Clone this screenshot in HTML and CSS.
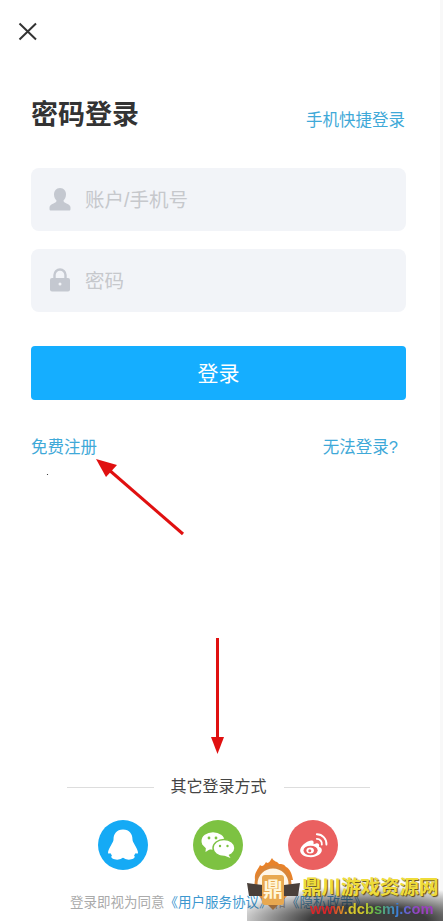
FILE: index.html
```html
<!DOCTYPE html>
<html lang="zh-CN">
<head>
  <meta charset="UTF-8" />
  <meta name="viewport" content="width=device-width, initial-scale=1.0" />
  <title>密码登录</title>
  <link rel="stylesheet" href="styles.css">
</head>
<body>
  <div class="app-container">
    <button class="close-btn" aria-label="关闭">
      <svg width="20" height="20" viewBox="0 0 20 20"><path d="M1.500 2.500 L18 18.500 M18 2.500 L1.500 18.500" stroke="#333" stroke-width="2" fill="none"/></svg>
    </button>

    <div class="form-area">
      <div class="title-row">
        <h1>密码登录</h1>
        <a class="link">手机快捷登录</a>
      </div>

      <div class="field">
        <svg width="22" height="24" viewBox="0 0 22 24"><path d="M11 1 C15 1 17 4 17 7.500 C17 10.500 15.600 12.500 14.500 13.500 C14.500 15 15.500 15.600 17.500 16.400 C20 17.400 21.500 18.500 21.500 20.500 L21.500 22 C21.500 23 21 23.500 20 23.500 L2 23.500 C1 23.500 .5 23 .5 22 L.5 20.500 C.5 18.500 2 17.400 4.500 16.400 C6.500 15.600 7.500 15 7.500 13.500 C6.400 12.500 5 10.500 5 7.500 C5 4 7 1 11 1 Z" fill="#c4c8d0"/></svg>
        <span>账户/手机号</span>
      </div>
      <div class="field">
        <svg width="22" height="24" viewBox="0 0 22 24"><path d="M5.500 10 V7 A5.500 5.500 0 0 1 16.500 7 V10" fill="none" stroke="#c4c8d0" stroke-width="2.400"/><rect x="1" y="10" width="20" height="13.500" rx="2" fill="#c4c8d0"/><circle cx="11" cy="16" r="1.500" fill="#f2f4f8"/></svg>
        <span>密码</span>
      </div>

      <button class="login-btn">登录</button>

      <div class="links-row">
        <a class="link">免费注册</a>
        <a class="link">无法登录?</a>
      </div>
    </div>

    <div class="other-login">
      <div class="divider"><span>其它登录方式</span></div>
      <div class="socials">
        <div class="social qq">
          <svg width="32" height="32" viewBox="0 0 32 32"><path d="M16 .5 C22.500 .5 25.500 5 25.500 10.500 C25.500 12.500 26.500 13.500 27.800 16 C29.300 18.800 31 21.500 31 23.500 C31 24.800 30 25 28.800 24 C28.300 24.800 27.800 25.600 27 26.200 C28 27.300 28 28.500 26.500 29.500 C24 31 19.500 31 17.500 29.500 C16.800 29 16.400 28.800 16 28.800 C15.600 28.800 15.200 29 14.500 29.500 C12.500 31 8 31 5.500 29.500 C4 28.500 4 27.300 5 26.200 C4.200 25.600 3.700 24.800 3.200 24 C2 25 1 24.800 1 23.500 C1 21.500 2.700 18.800 4.200 16 C5.500 13.500 6.500 12.500 6.500 10.500 C6.500 5 9.500 .5 16 .5 Z" fill="#fff"/></svg>
        </div>
        <div class="social wechat">
          <svg width="34" height="26" viewBox="0 0 34 26">
            <ellipse cx="12" cy="9" rx="11.500" ry="8.800" fill="#fff"/>
            <path d="M5 14 L4.500 20 L10 16.500 Z" fill="#fff"/>
            <ellipse cx="23" cy="16" rx="11" ry="8.500" fill="#fff" stroke="#7dc242" stroke-width="1.500"/>
            <path d="M27 22 L29.500 26 L23 23.500 Z" fill="#fff"/>
            <circle cx="8" cy="6" r="1.400" fill="#7dc242"/><circle cx="15" cy="6" r="1.400" fill="#7dc242"/>
            <circle cx="19" cy="14" r="1.200" fill="#7dc242"/><circle cx="26.500" cy="14" r="1.200" fill="#7dc242"/>
          </svg>
        </div>
        <div class="social weibo">
          <svg width="29" height="25" viewBox="0 0 34 30">
            <path d="M14 9 C8 10 1 16 1 21 C1 26 7 29 14 29 C21 29 27 25 27 20.500 C27 18 25 17 23.500 16.500 C24.500 13.500 23 12 20 12.500 L17 13.500 C17.500 10 17 8.500 14 9 Z" fill="#fff"/>
            <ellipse cx="13.500" cy="21" rx="8.500" ry="5.800" fill="#ea6060"/>
            <ellipse cx="13" cy="21" rx="4.500" ry="3.500" fill="#fff"/>
            <circle cx="12.500" cy="21.300" r="1.800" fill="#ea6060"/>
            <path d="M21 7 A6 6 0 0 1 27 14 M21 1.500 A11.500 11.500 0 0 1 32.500 14" fill="none" stroke="#fff" stroke-width="2.200" stroke-linecap="round"/>
          </svg>
        </div>
      </div>
      <p class="agreement">登录即视为同意<a>《用户服务协议》</a>和<a>《隐私政策》</a></p>
    </div>

    <!-- annotations drawn on top of the screenshot -->
    <svg class="arrows" width="443" height="921" viewBox="0 0 443 921">
      <path d="M183 534 L108 469" stroke="#e01010" stroke-width="3" fill="none"/>
      <path d="M96 459 L117 465 L106 477 Z" fill="#e01010"/>
      <path d="M217.500 638 V742" stroke="#e01010" stroke-width="3" fill="none"/>
      <path d="M211 737 H224 L217.500 754 Z" fill="#e01010"/>
      <circle cx="47.500" cy="474.500" r=".6" fill="#222"/>
    </svg>

    <div class="watermark">
      <svg class="wm-logo" width="54" height="58" viewBox="0 0 54 58">
        <path d="M8 24 C7 16 11 14 13 9 C15 11 17 10 19 6 C21 9 23 5 25 2 C27 6 30 5 32 8 C35 8 37 8 39 11 C42 12 45 17 46 24 Z" fill="#e8822a"/>
        <circle cx="26" cy="28" r="17" fill="#fff6e6" stroke="#d8863a" stroke-width="3"/>
        <path d="M0 27 L16 29 L16 40 L2 40 Z M53 27 L37 29 L37 40 L51 40 Z" fill="#4a403a"/>
        <path d="M14 42 L38 42 L26 54 Z" fill="#9a6a3c"/>
        <rect x="15" y="19" width="22" height="30" rx="3" fill="#e8a850"/>
        <text class="wm-glyph" x="26" y="41">鼎</text>
      </svg>
      <div class="wm-text">
        <div class="wm-name">鼎川游戏资源网</div>
        <div class="wm-url">www.dcbsmj.com</div>
      </div>
    </div>
  </div>
</body>
</html>
```

FILE: styles.css
```css
/* Base */
* { margin: 0; padding: 0; box-sizing: border-box; }
html, body { height: 100%; }
body {
  font-family: "Liberation Sans", "Noto Sans CJK SC", sans-serif;
  background: #f8f8f8;
  color: #333;
  overflow: hidden;
}
.app-container {
  position: relative;
  width: 440px;
  height: 921px;
  background: #fff;
  display: flex;
  flex-direction: column;
}

/* Close button */
.close-btn {
  align-self: flex-start;
  margin: 21px 0 0 18px;
  width: 20px;
  height: 20px;
  border: none;
  background: none;
}

/* Form */
.form-area {
  padding: 0 34px 0 31px;
}
.title-row {
  display: flex;
  justify-content: space-between;
  align-items: flex-start;
  margin-top: 54px;
  height: 73px;
  padding-right: 1px;
}
.title-row h1 {
  font-size: 27px;
  line-height: 40px;
  font-weight: 700;
  color: #333;
}
.title-row .link { line-height: 30px; margin-top: 10px; }
.link {
  color: #3fa9d8;
  font-size: 16.500px;
}
.field {
  display: flex;
  align-items: center;
  gap: 14px;
  height: 63px;
  padding: 0 0 2px 18px;
  margin-bottom: 18px;
  background: #f2f4f8;
  border-radius: 8px;
  color: #c6c8cc;
  font-size: 19.500px;
}
.login-btn {
  display: block;
  width: 100%;
  height: 54px;
  margin-top: 34px;
  padding-bottom: 2px;
  border: none;
  border-radius: 4px;
  background: #15aeff;
  color: #fff;
  font-family: inherit;
  font-size: 21px;
}
.links-row {
  display: flex;
  justify-content: space-between;
  padding: 0 8px 0 0;
  margin-top: 35px;
  line-height: 24px;
}

/* Other login methods */
.other-login {
  position: absolute;
  top: 775px;
  left: 0;
  width: 100%;
}
.divider {
  display: flex;
  align-items: center;
  gap: 17px;
  margin: 0 70px 0 67px;
  font-size: 16px;
  line-height: 24px;
  color: #444;
  justify-content: center;
}
.divider::before, .divider::after {
  content: "";
  flex: 1;
  height: 1px;
  background: #ddd;
}
.socials {
  display: flex;
  justify-content: center;
  gap: 45px;
  margin-top: 21px;
  padding-right: 4px;
}
.social {
  width: 50px;
  height: 50px;
  border-radius: 50%;
  display: flex;
  align-items: center;
  justify-content: center;
}
.qq { background: #15aaf5; }
.wechat { background: #7dc242; }
.weibo { background: #ea6060; }
.agreement {
  margin-top: 23px;
  padding-left: 70px;
  font-size: 13.500px;
  line-height: 20px;
  color: #aaa;
  white-space: nowrap;
}
.agreement a { color: #3c97cf; }

/* Overlays */
.arrows {
  position: absolute;
  top: 0;
  left: 0;
  pointer-events: none;
}
.watermark {
  position: absolute;
  left: 247px;
  top: 856px;
  width: 196px;
  height: 65px;
  display: flex;
  background: radial-gradient(ellipse 75% 55% at 62% 100%, rgba(40,40,40,.9) 40%, rgba(40,40,40,0) 100%);
}
.wm-logo { flex: none; }
.wm-glyph {
  font-family: "Noto Sans CJK SC", sans-serif;
  font-size: 20px;
  font-weight: 700;
  fill: #fff6d8;
  text-anchor: middle;
}
.wm-text { margin-left: 1px; padding-top: 19px; white-space: nowrap; }
.wm-name {
  font-size: 19.500px;
  font-weight: 700;
  line-height: 24px;
  color: #efdc3a;
  text-shadow: 1px 1px 1px #5a4a10;
}
.wm-url {
  font-size: 14.700px;
  font-weight: 700;
  line-height: 19px;
  margin-top: 1px;
  margin-right: 8px;
  padding-left: 8px;
  background: linear-gradient(90deg, #d8262a 0%, #d8262a 22%, #d8c92a 36%, #d8c92a 46%, #5fb848 56%, #3a7fd8 72%, #9a3fc0 88%);
  -webkit-background-clip: text;
  background-clip: text;
  color: transparent;
}
```
